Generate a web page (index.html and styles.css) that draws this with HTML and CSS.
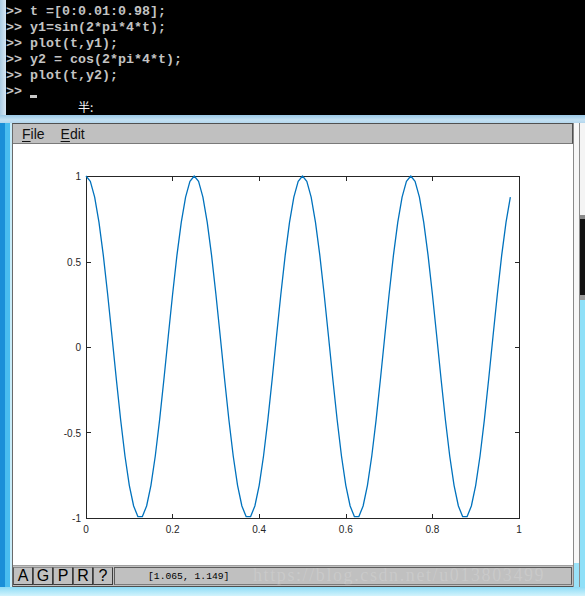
FILE: index.html
```html
<!DOCTYPE html>
<html>
<head>
<meta charset="utf-8">
<link rel="stylesheet" href="styles.css">
</head>
<body>
<div class="screen">
  <div class="term">
    <div class="term-edge"></div>
    <div class="term-body">
      <div class="ln">&gt;&gt; t =[0:0.01:0.98];</div>
      <div class="ln">&gt;&gt; y1=sin(2*pi*4*t);</div>
      <div class="ln">&gt;&gt; plot(t,y1);</div>
      <div class="ln">&gt;&gt; y2 = cos(2*pi*4*t);</div>
      <div class="ln">&gt;&gt; plot(t,y2);</div>
      <div class="ln">&gt;&gt; <span class="cursor"></span></div>
      <div class="ime">半:</div>
    </div>
  </div>
  <div class="term-foot"></div>
  <div class="fig-row">
    <div class="side-left"></div>
    <div class="fig">
      <div class="menubar">
        <span class="menu"><u>F</u>ile</span>
        <span class="menu"><u>E</u>dit</span>
      </div>
      <div class="canvas">
        <svg class="plot" width="560" height="421" viewBox="0 0 560 421">
          <rect x="73.5" y="32.5" width="433" height="342" fill="none" stroke="#262626" stroke-width="1"/>
          <path d="M73.5 118.5h4.5M73.5 203.5h4.5M73.5 288.5h4.5M506.5 118.5h-4.5M506.5 203.5h-4.5M506.5 288.5h-4.5M159.5 374.5v-4.5M246.5 374.5v-4.5M333.5 374.5v-4.5M419.5 374.5v-4.5M159.5 32.5v4.5M246.5 32.5v4.5M333.5 32.5v4.5M419.5 32.5v4.5" stroke="#262626" stroke-width="1" fill="none"/>
          <g class="ylab">
            <text x="68" y="35.6">1</text>
            <text x="68" y="121.6">0.5</text>
            <text x="68" y="207">0</text>
            <text x="68" y="292.5">-0.5</text>
            <text x="68" y="378">-1</text>
          </g>
          <g class="xlab">
            <text x="73" y="389">0</text>
            <text x="159.6" y="389">0.2</text>
            <text x="246.2" y="389">0.4</text>
            <text x="332.8" y="389">0.6</text>
            <text x="419.4" y="389">0.8</text>
            <text x="506" y="389">1</text>
          </g>
          <polyline transform="translate(73 0) scale(4.33 1)" vector-effect="non-scaling-stroke" fill="none" stroke="#0072bd" stroke-width="1.3" stroke-linejoin="round"
            points="0,32 1,37.4 2,53.2 3,78.4 4,111.4 5,150.2 6,192.3 7,235 8,275.8 9,312 10,341.3 11,362 12,372.7 13,372.7 14,362 15,341.3 16,312 17,275.8 18,235 19,192.3 20,150.2 21,111.4 22,78.4 23,53.2 24,37.4 25,32 26,37.4 27,53.2 28,78.4 29,111.4 30,150.2 31,192.3 32,235 33,275.8 34,312 35,341.3 36,362 37,372.7 38,372.7 39,362 40,341.3 41,312 42,275.8 43,235 44,192.3 45,150.2 46,111.4 47,78.4 48,53.2 49,37.4 50,32 51,37.4 52,53.2 53,78.4 54,111.4 55,150.2 56,192.3 57,235 58,275.8 59,312 60,341.3 61,362 62,372.7 63,372.7 64,362 65,341.3 66,312 67,275.8 68,235 69,192.3 70,150.2 71,111.4 72,78.4 73,53.2 74,37.4 75,32 76,37.4 77,53.2 78,78.4 79,111.4 80,150.2 81,192.3 82,235 83,275.8 84,312 85,341.3 86,362 87,372.7 88,372.7 89,362 90,341.3 91,312 92,275.8 93,235 94,192.3 95,150.2 96,111.4 97,78.4 98,53.2"/>
        </svg>
      </div>
      <div class="statusbar">
        <div class="btn">A</div>
        <div class="btn">G</div>
        <div class="btn">P</div>
        <div class="btn">R</div>
        <div class="btn">?</div>
        <div class="coords">[1.065, 1.149]</div>
        <div class="watermark">https://blog.csdn.net/u013803499</div>
      </div>
    </div>
    <div class="side-right">
      <div class="sr-in"></div>
      <div class="sr-out"></div>
    </div>
  </div>
  <div class="foot"></div>
</div>
</body>
</html>
```

FILE: styles.css
```css
* { box-sizing: border-box; }
html, body { margin: 0; padding: 0; }
body { width: 585px; height: 596px; overflow: hidden; background: #8adcf6; }
.screen { width: 585px; height: 596px; display: flex; flex-direction: column; overflow: hidden; }

.term { height: 115px; display: flex; flex: none; }
.term-edge { width: 6px; background: linear-gradient(to right, #a9cbe4, #d7e7f3); }
.term-body {
  flex: 1; background: #000; padding-top: 4px; overflow: hidden;
  font-family: "Liberation Mono", "DejaVu Sans Mono", monospace;
  font-weight: bold; font-size: 13.33px; line-height: 16px; color: #c4c4c4;
}
.ln { white-space: pre; height: 16px; }
.cursor { display: inline-block; width: 7px; height: 3px; background: #c8c8c8; vertical-align: -3px; }
.ime {
  padding-left: 72px; height: 14px; color: #f0f0f0; font-weight: normal;
  font-family: "Noto Sans CJK SC", "Liberation Sans", sans-serif; font-size: 12px; line-height: 13px;
}

.term-foot { height: 8px; flex: none; background: linear-gradient(to bottom, #9ac8e6, #c4e1f3 60%, #b4d7ee); }

.fig-row { height: 464px; display: flex; flex: none; }
.side-left { width: 12px; background: linear-gradient(to right, #1a8fd8 0 5px, #49bdf0 5px 10px, #c8ecf9 10px 12px); }
.side-right { width: 12px; display: flex; }
.sr-in {
  width: 7px; border-left: 1px solid #8a8a8a; border-right: 1px solid #8c8c8c;
  background: linear-gradient(to bottom, #f7f7f7 0 440px, #9ae2f8 440px);
}
.sr-out {
  width: 5px;
  background: linear-gradient(to bottom, #f4f4f4 0 92px, #8a8a8a 92px 96px, #121212 96px 172px, #9a9a9a 172px 177px, #8fe0f8 177px);
}
.fig { width: 561px; display: flex; flex-direction: column; border-left: 1px solid #6a6a6a; border-top: 1px solid #505050; background: #fff; }

.menubar {
  height: 20px; flex: none; background: #c0c0c0; border-bottom: 1px solid #7a7a7a; border-right: 1px solid #505050;
  padding-left: 9px; display: flex; align-items: center; gap: 16px;
  font-family: "Liberation Sans", Arial, sans-serif; font-size: 14px; color: #111;
}
.menu u { text-decoration: underline; text-underline-offset: 2px; }

.canvas { height: 421px; flex: none; background: #fff; }
.plot { display: block; }
.plot text { font-family: "Liberation Sans", Arial, sans-serif; font-size: 10px; fill: #262626; }
.ylab text { text-anchor: end; }
.xlab text { text-anchor: middle; }

.statusbar {
  height: 22px; flex: none; position: relative; overflow: hidden;
  background: #c0c0c0; border-top: 1px solid #a0a0a0; border-bottom: 1px solid #505050;
  padding: 1px 1px 1px 0; display: flex;
}
.btn {
  width: 20px; height: 18px; border: 1px solid #3c3c3c; border-top-color: #8a8a8a; border-left-color: #5a5a5a;
  display: flex; align-items: center; justify-content: center;
  font-family: "Liberation Sans", Arial, sans-serif; font-size: 16px; color: #000; line-height: 1;
}
.coords {
  flex: 1; margin-left: 1px; height: 18px; border: 1px solid #5a5a5a; border-bottom-color: #7a7a7a;
  padding-left: 33px; display: flex; align-items: center;
  font-family: "Liberation Mono", "DejaVu Sans Mono", monospace; font-size: 9.7px; color: #000;
}
.watermark {
  position: absolute; left: 240px; top: 0; white-space: nowrap;
  font-family: "Liberation Serif", serif; font-size: 18px; letter-spacing: 1.6px; line-height: 19px;
  color: rgba(255, 255, 255, 0.17);
}

.foot { height: 9px; flex: none; background: linear-gradient(to bottom, #8edcf6, #d2f3fc); }
```
